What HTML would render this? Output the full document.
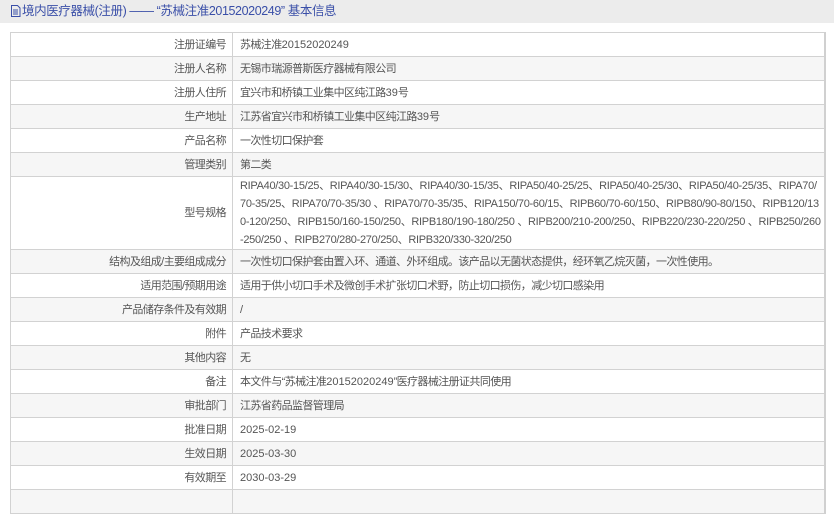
<!DOCTYPE html>
<html><head><meta charset="utf-8"><style>
*{margin:0;padding:0;box-sizing:border-box}
body{width:834px;height:495px;overflow:hidden;background:#fff;font-family:"Liberation Sans","Noto Sans CJK SC",sans-serif;font-size:11px;letter-spacing:-0.6px;color:#555}
.hd{height:23px;background:#ececec;color:#3a4fa8;font-size:12.5px;letter-spacing:-0.4px;line-height:23px;padding-left:10px;white-space:nowrap}
.hd svg{vertical-align:-2px;margin-right:1px}
table{position:absolute;left:10px;top:32px;width:816px;table-layout:fixed;border-collapse:collapse;border:1px solid #d2d2d2;border-right:2px solid #d0d0d0}
td{border-top:1px solid #d2d2d2;border-bottom:1px solid #d2d2d2;height:24px;line-height:16px;vertical-align:middle;white-space:nowrap;overflow:hidden}
td.l{text-align:right;padding-right:6px;border-right:1px solid #d2d2d2}
td.v{padding-left:7px;padding-right:4px}
tr:nth-child(even) td{background:#f6f6f6}
td.sp{line-height:18px;height:73px;font-size:11px;letter-spacing:-0.3px}
.n{font-size:11px;letter-spacing:0}
</style></head><body>
<div class="hd"><svg width="11" height="12" viewBox="0 0 11 12"><path d="M1.5 .5h6l2.5 2.5v8.5h-8.5z M3 5h5 M3 7h5 M3 9h5" fill="none" stroke="#3a4fa8" stroke-width="1"/></svg>境内医疗器械(注册) —— “苏械注准20152020249” 基本信息</div>
<table>
<colgroup><col style="width:222px"><col></colgroup>
<tr><td class="l">注册证编号</td><td class="v">苏械注准<span class="n">20152020249</span></td></tr>
<tr><td class="l">注册人名称</td><td class="v">无锡市瑞源普斯医疗器械有限公司</td></tr>
<tr><td class="l">注册人住所</td><td class="v">宜兴市和桥镇工业集中区纯江路<span class="n">39</span>号</td></tr>
<tr><td class="l">生产地址</td><td class="v">江苏省宜兴市和桥镇工业集中区纯江路<span class="n">39</span>号</td></tr>
<tr><td class="l">产品名称</td><td class="v">一次性切口保护套</td></tr>
<tr><td class="l">管理类别</td><td class="v">第二类</td></tr>
<tr><td class="l">型号规格</td><td class="v sp">RIPA40/30-15/25、RIPA40/30-15/30、RIPA40/30-15/35、RIPA50/40-25/25、RIPA50/40-25/30、RIPA50/40-25/35、RIPA70/<br>70-35/25、RIPA70/70-35/30 、RIPA70/70-35/35、RIPA150/70-60/15、RIPB60/70-60/150、RIPB80/90-80/150、RIPB120/13<br>0-120/250、RIPB150/160-150/250、RIPB180/190-180/250 、RIPB200/210-200/250、RIPB220/230-220/250 、RIPB250/260<br>-250/250 、RIPB270/280-270/250、RIPB320/330-320/250</td></tr>
<tr><td class="l">结构及组成/主要组成成分</td><td class="v">一次性切口保护套由置入环、通道、外环组成。该产品以无菌状态提供，经环氧乙烷灭菌，一次性使用。</td></tr>
<tr><td class="l">适用范围/预期用途</td><td class="v">适用于供小切口手术及微创手术扩张切口术野，防止切口损伤，减少切口感染用</td></tr>
<tr><td class="l">产品储存条件及有效期</td><td class="v">/</td></tr>
<tr><td class="l">附件</td><td class="v">产品技术要求</td></tr>
<tr><td class="l">其他内容</td><td class="v">无</td></tr>
<tr><td class="l">备注</td><td class="v">本文件与“苏械注准<span class="n">20152020249</span>”医疗器械注册证共同使用</td></tr>
<tr><td class="l">审批部门</td><td class="v">江苏省药品监督管理局</td></tr>
<tr><td class="l">批准日期</td><td class="v n">2025-02-19</td></tr>
<tr><td class="l">生效日期</td><td class="v n">2025-03-30</td></tr>
<tr><td class="l">有效期至</td><td class="v n">2030-03-29</td></tr>
<tr><td class="l">&nbsp;</td><td class="v">&nbsp;</td></tr>
</table>
</body></html>
